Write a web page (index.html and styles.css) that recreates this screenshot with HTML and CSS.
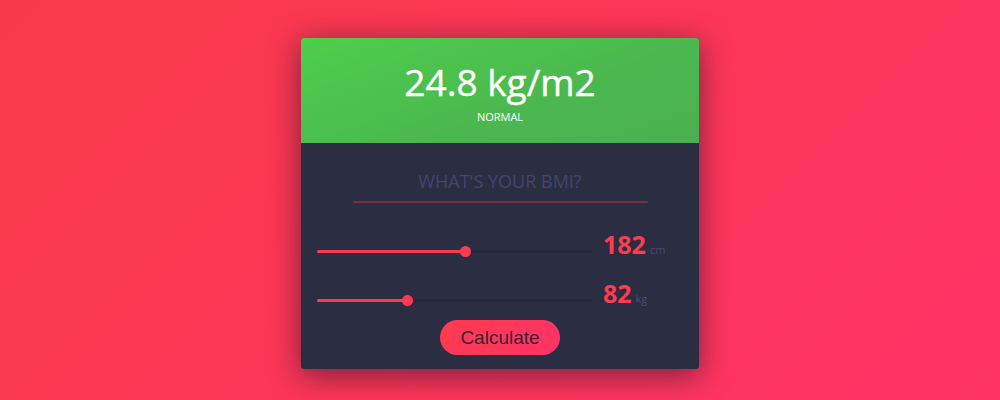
FILE: index.html
```html
<!DOCTYPE html>
<html>
<head>
<meta charset="utf-8">
<link rel="stylesheet" href="styles.css">
</head>
<body>
<div class="card">
  <div class="result">
    <div class="bmi">24.8 kg/m2</div>
    <div class="status">NORMAL</div>
  </div>
  <div class="panel">
    <h1 class="title">WHAT'S YOUR BMI?</h1>
    <div class="rule"></div>
    <div class="row row-height">
      <div class="track"><div class="fill" style="width:54%"></div><div class="thumb" style="left:54%"></div></div>
      <div class="value"><span class="num">182</span><span class="unit">cm</span></div>
    </div>
    <div class="row row-weight">
      <div class="track"><div class="fill" style="width:33%"></div><div class="thumb" style="left:33%"></div></div>
      <div class="value"><span class="num">82</span><span class="unit">kg</span></div>
    </div>
    <button class="calc">Calculate</button>
  </div>
</div>
</body>
</html>
```

FILE: styles.css
```css
html, body { height: 100%; }
body {
  margin: 0;
  background: linear-gradient(135deg, #f9394a 0%, #fd355a 60%, #ff3366 100%);
  font-family: "Open Sans", "Noto Sans", sans-serif;
  display: flex;
  justify-content: center;
  align-items: flex-start;
}
.card {
  margin-top: 38px;
  width: 398px;
  height: 331px;
  border-radius: 3px;
  overflow: hidden;
  background: #2b2d42;
  box-shadow: 0 6px 30px rgba(30, 20, 40, 0.6);
  display: flex;
  flex-direction: column;
}
.result {
  height: 105px;
  background: linear-gradient(160deg, #4dce4c 0%, #4bb84f 60%, #4aaf50 100%);
  color: #fff;
  display: flex;
  flex-direction: column;
  align-items: center;
  box-sizing: border-box;
  padding-top: 19px;
}
.bmi {
  font-size: 37px;
  line-height: 50px;
  font-weight: 400;
  -webkit-text-stroke: 0.4px #fff;
}
.status {
  font-size: 11px;
  line-height: 14px;
  margin-top: 3px;
}
.panel {
  flex: 1;
  display: flex;
  flex-direction: column;
  align-items: center;
}
.title {
  margin: 25px 0 0;
  font-size: 18px;
  line-height: 26px;
  font-weight: 400;
  color: #44446c;
}
.rule {
  width: 295px;
  height: 2px;
  margin-top: 7px;
  background: #7b2c47;
  border-radius: 1px;
}
.row {
  align-self: stretch;
  display: flex;
  align-items: center;
  padding-left: 16px;
  height: 30px;
}
.row-height { margin-top: 33px; }
.row-weight { margin-top: 19px; }
.track {
  position: relative;
  width: 275px;
  height: 3px;
  background: #26283a;
  border-radius: 2px;
}
.fill {
  height: 100%;
  background: #ff3b4f;
  border-radius: 2px;
}
.thumb {
  position: absolute;
  top: 50%;
  width: 11px;
  height: 11px;
  margin: -5.5px 0 0 -5.5px;
  background: #ff3b4f;
  border-radius: 50%;
}
.value {
  margin-left: 11px;
  display: flex;
  align-items: baseline;
  margin-top: -14px;
}
.num {
  font-size: 25px;
  font-weight: 700;
  color: #ff3b4f;
}
.unit {
  font-size: 11px;
  color: #4a4c6c;
  margin-left: 4px;
}
.calc {
  margin-top: 5px;
  width: 120px;
  height: 35px;
  border: none;
  border-radius: 18px;
  background: linear-gradient(120deg, #ff3b4f 0%, #ff3366 100%);
  color: #3a2138;
  font-family: "Liberation Sans", Arial, sans-serif;
  font-size: 19px;
  padding: 0;
}
```
